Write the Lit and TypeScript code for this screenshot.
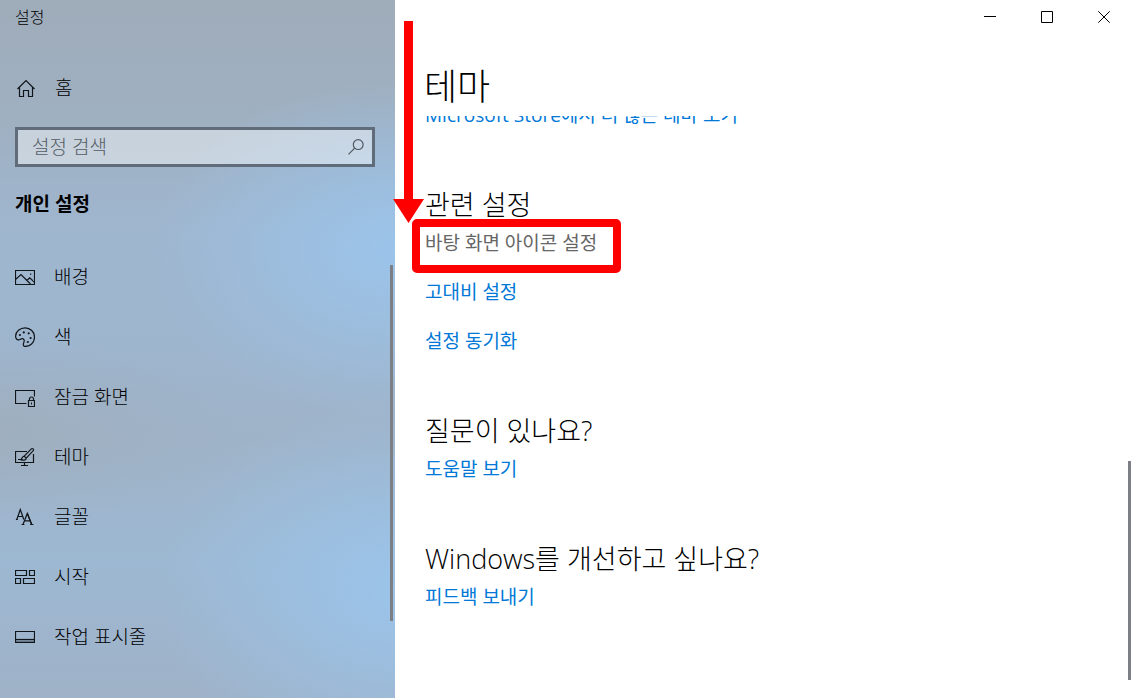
import { LitElement, html, svg, css } from "lit";
import { customElement, property } from "lit/decorators.js";

const icons: Record<string, unknown> = {
  home: svg`<path d="M1.5 11 10 2.5 18.5 11M3.5 9.5V18.5H7.5V12.5H12.5V18.5H16.5V9.5" />`,
  picture: svg`<path d="M.5 3.5H19.5V17.5H.5Z M.5 12.5 6 7.5 15.5 17 M12 13.5 14.7 10.8 19.5 15.3" /><path class="fill" d="M15 6.5h1.3v1.3H15z" />`,
  palette: svg`<path d="M9.5 19.4C15 19.8 19.5 15.5 19.5 10.2 19.5 4.8 15.3.8 10.2.8 5 .8.6 4.6.6 9.2.6 11.6 2 13 3.8 12.8 5.2 12.6 6.2 11.2 7.6 11.6 9.6 12.2 9.4 14 8.8 15.4 8.1 17.1 8 19.1 9.5 19.4Z" />
    <g class="fill"><circle cx="4.9" cy="8" r="1.1" /><circle cx="8.8" cy="5.4" r="1.1" /><circle cx="13.7" cy="6.3" r="1.1" /><circle cx="15.6" cy="11" r="1.1" /><circle cx="12.8" cy="15" r="1.1" /></g>`,
  lock: svg`<path d="M11.5 16.5H.5V3.5H19.5V9.5M13.5 13.5H19.5V19.5H13.5ZM14.5 13.5V12A2 2 0 0 1 18.5 12V13.5" /><path class="fill" d="M16 15.5h1v2h-1z" />`,
  theme: svg`<path d="M12 4.5H.5V15.5H18.5V7M9.5 15.5V18.5M6 18.5H13M3 12.5H7.5" />
    <path d="M9.2 9.2 16.3 1.9C17.6.9 19.3 2.3 18.3 3.7L11.2 11.2ZM9.2 9.2C7.4 9.2 7.4 11.5 5.8 12.6 7.8 13.6 11.2 13.4 11.2 11.2" />`,
  font: svg`<path d="M1.8 12.5 5.3 2.5 8.8 12.5M3 9.5H7.6M.9 12.5H2.9" /><path d="M8 17.5 12.3 6.5 16.7 17.5M9.6 13.8H15.2M6.6 17.5H9.4M15.2 17.5H18.4" /><path d="M12.6 7 16.5 17" />`,
  start: svg`<path d="M.5 3.5H11.5V8.5H.5ZM14.5 3.5H19.5V8.5H14.5ZM.5 11.5H5.5V16.5H.5ZM8.5 11.5H19.5V16.5H8.5Z" />`,
  taskbar: svg`<path d="M.5 4.5H19.5V15.5H.5Z" /><path d="M1 12.5H19" /><path class="soft" d="M1 13.5H19V15H1Z" />`,
};

@customElement("nav-entry")
export class NavEntry extends LitElement {
  @property() icon = "";
  @property() label = "";

  static styles = css`
    :host {
      display: block;
    }
    .entry {
      display: flex;
      align-items: center;
      gap: 19px;
      min-height: inherit;
      color: #000;
      text-decoration: none;
    }
    .icon {
      width: 20px;
      height: 20px;
      flex: none;
      fill: none;
      stroke: #10151a;
      stroke-width: 1.2;
    }
    .fill {
      fill: #10151a;
      stroke: none;
    }
    .soft {
      fill: rgba(16, 21, 26, 0.4);
      stroke: none;
    }
  `;

  render() {
    return html`<a class="entry" href="#">
      <svg class="icon" viewBox="0 0 20 20" aria-hidden="true">${icons[this.icon]}</svg>
      <span>${this.label}</span>
    </a>`;
  }
}

const entries = [
  { icon: "picture", label: "배경" },
  { icon: "palette", label: "색" },
  { icon: "lock", label: "잠금 화면" },
  { icon: "theme", label: "테마" },
  { icon: "font", label: "글꼴" },
  { icon: "start", label: "시작" },
  { icon: "taskbar", label: "작업 표시줄" },
];

@customElement("app-root")
export class AppRoot extends LitElement {
  static styles = css`
    :host {
      display: grid;
      grid-template-columns: 395px 1fr;
      min-height: 100vh;
      position: relative;
      background: #fff;
      color: #000;
      font-family: "Open Sans", "Noto Sans CJK KR", sans-serif;
      font-size: 19px;
      font-weight: 300;
      line-height: 24px;
    }
    h1,
    h2,
    ul {
      margin: 0;
      padding: 0;
      font-weight: inherit;
      list-style: none;
    }
    .sidebar {
      position: relative;
      padding: 0 20px 0 15px;
      background:
        radial-gradient(ellipse 240px 170px at 395px 250px, #9bc4ea, rgba(155, 196, 234, 0)),
        radial-gradient(ellipse 240px 190px at 400px 590px, #9bc4ea, rgba(155, 196, 234, 0)),
        radial-gradient(ellipse 240px 90px at 0 430px, #9fafbf, rgba(159, 175, 191, 0)),
        linear-gradient(#9facba 0, #9fb0c1 120px, #9fb6cf 230px, #9eb5ce 350px, #9fb3c8 440px, #9db8d2 560px, #9fb2c8 698px);
    }
    .caption {
      font-size: 16px;
      line-height: 34px;
    }
    .home {
      min-height: 40px;
      margin: 34px 0 19px 1px;
    }
    .search {
      display: flex;
      align-items: center;
      height: 34px;
      border: 3px solid #606c79;
      background: rgba(255, 255, 255, 0.43);
    }
    .search-input {
      flex: 1;
      min-width: 0;
      padding: 0 14px;
      border: 0;
      outline: 0;
      background: none;
      font: inherit;
      color: #000;
    }
    .search-input::placeholder {
      color: #545c64;
      opacity: 1;
    }
    .search-button {
      display: flex;
      padding: 0 8px;
      border: 0;
      background: none;
    }
    .glyph {
      fill: none;
      stroke: #4f5860;
      stroke-width: 1.2;
    }
    .section {
      margin: 25px 0 31px;
      font-size: 19px;
      font-weight: 700;
    }
    .nav-item {
      min-height: 60px;
    }
    .thumb {
      position: absolute;
      width: 3px;
      background: #7c7f83;
    }
    .thumb-nav {
      right: 2px;
      top: 38%;
      height: 51%;
    }
    .thumb-page {
      right: 1px;
      top: 66%;
      bottom: 18px;
    }
    .page {
      display: flex;
      flex-direction: column;
      min-width: 0;
    }
    .window-bar {
      display: flex;
      justify-content: flex-end;
    }
    .window-button {
      display: grid;
      place-items: center;
      width: 57px;
      height: 34px;
      padding: 0;
      border: 0;
      background: none;
    }
    .window-glyph {
      fill: none;
      stroke: #000;
    }
    .title {
      padding: 29px 29px 5px;
      font-size: 36px;
      line-height: 48px;
    }
    .scroll {
      flex: 1;
      overflow: hidden;
      padding: 0 30px;
    }
    .links {
      display: grid;
      gap: 25px;
      justify-items: start;
    }
    .above {
      margin-top: -13px;
    }
    .group {
      padding-top: 60px;
    }
    .group-title {
      margin-bottom: 8px;
      font-size: 27px;
      line-height: 36px;
    }
    .link {
      color: #0078d7;
      font-weight: 400;
      text-decoration: none;
    }
    .pressed {
      color: #666;
    }
    .mark {
      position: absolute;
      left: 392px;
      top: 20px;
      pointer-events: none;
    }
  `;

  private group(title: string, links: string[], pressed = "") {
    return html`<section class="group">
      <h2 class="group-title">${title}</h2>
      <ul class="links">
        ${links.map((text) => html`<li><a class="link ${text === pressed ? "pressed" : ""}" href="#">${text}</a></li>`)}
      </ul>
    </section>`;
  }

  render() {
    return html`
      <aside class="sidebar">
        <div class="caption">설정</div>
        <nav-entry class="home" icon="home" label="홈"></nav-entry>
        <div class="search">
          <input class="search-input" type="text" aria-label="설정 검색" placeholder="설정 검색" />
          <button class="search-button" type="button" aria-label="검색">
            <svg class="glyph" width="16" height="16" viewBox="0 0 16 16"><circle cx="10.2" cy="5.6" r="4.9" /><path d="M6.7 9.2.5 15.4" /></svg>
          </button>
        </div>
        <h2 class="section">개인 설정</h2>
        <nav>
          ${entries.map((e) => html`<nav-entry class="nav-item" icon=${e.icon} label=${e.label}></nav-entry>`)}
        </nav>
        <div class="thumb thumb-nav"></div>
      </aside>
      <main class="page">
        <div class="window-bar">
          <button class="window-button" type="button" aria-label="최소화">
            <svg class="window-glyph" width="12" height="12"><path d="M0 5.5H12" /></svg>
          </button>
          <button class="window-button" type="button" aria-label="최대화">
            <svg class="window-glyph" width="12" height="12"><path d="M.5.5H11.5V11.5H.5Z" /></svg>
          </button>
          <button class="window-button" type="button" aria-label="닫기">
            <svg class="window-glyph" width="12" height="12"><path d="M.3.3 11.7 11.7M11.7.3.3 11.7" /></svg>
          </button>
        </div>
        <h1 class="title">테마</h1>
        <div class="scroll">
          <div class="above"><a class="link" href="#">Microsoft Store에서 더 많은 테마 보기</a></div>
          ${this.group("관련 설정", ["바탕 화면 아이콘 설정", "고대비 설정", "설정 동기화"], "바탕 화면 아이콘 설정")}
          ${this.group("질문이 있나요?", ["도움말 보기"])}
          ${this.group("Windows를 개선하고 싶나요?", ["피드백 보내기"])}
        </div>
      </main>
      <div class="thumb thumb-page"></div>
      <svg class="mark" width="230" height="254" aria-hidden="true">
        <path d="M12 1H21V179H32L16.500 203 1 179H12Z" fill="#f00" />
        <rect x="24" y="203" width="201" height="46" rx="1" fill="none" stroke="#f00" stroke-width="8" stroke-linejoin="round" />
      </svg>
    `;
  }
}
